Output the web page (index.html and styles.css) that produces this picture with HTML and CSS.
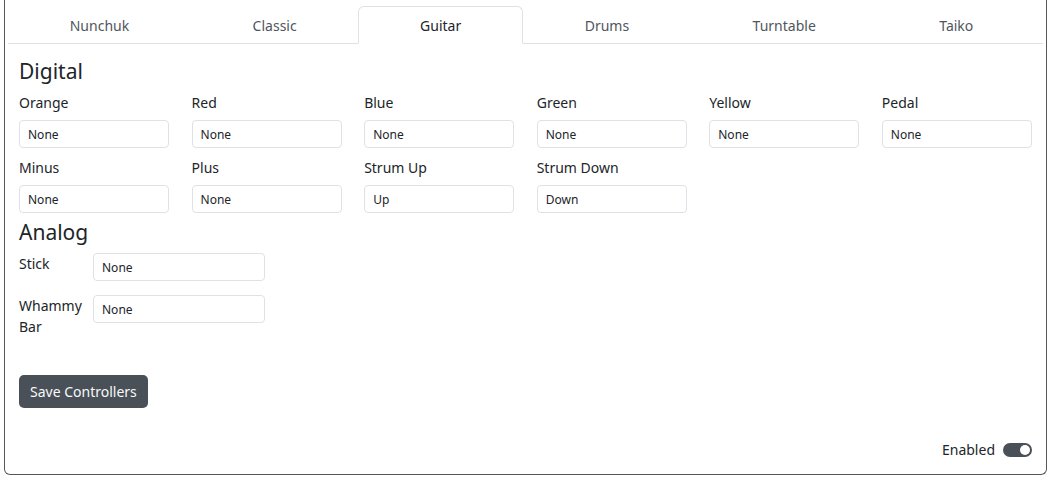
FILE: index.html
```html
<!DOCTYPE html>
<html lang="en">
<head>
<meta charset="utf-8">
<title>Controllers</title>
<link rel="stylesheet" href="styles.css">
</head>
<body>
<div class="card">
  <div class="card-header">
    <nav class="tabs">
      <a class="tab">Nunchuk</a>
      <a class="tab">Classic</a>
      <a class="tab active">Guitar</a>
      <a class="tab">Drums</a>
      <a class="tab">Turntable</a>
      <a class="tab">Taiko</a>
    </nav>
  </div>
  <div class="card-body">
    <h5 class="section-title">Digital</h5>
    <div class="digital-grid">
      <div class="field"><label class="field-label">Orange</label><input class="field-input" value="None"></div>
      <div class="field"><label class="field-label">Red</label><input class="field-input" value="None"></div>
      <div class="field"><label class="field-label">Blue</label><input class="field-input" value="None"></div>
      <div class="field"><label class="field-label">Green</label><input class="field-input" value="None"></div>
      <div class="field"><label class="field-label">Yellow</label><input class="field-input" value="None"></div>
      <div class="field"><label class="field-label">Pedal</label><input class="field-input" value="None"></div>
      <div class="field"><label class="field-label">Minus</label><input class="field-input" value="None"></div>
      <div class="field"><label class="field-label">Plus</label><input class="field-input" value="None"></div>
      <div class="field"><label class="field-label">Strum Up</label><input class="field-input" value="Up"></div>
      <div class="field"><label class="field-label">Strum Down</label><input class="field-input" value="Down"></div>
    </div>
    <h5 class="section-title analog-title">Analog</h5>
    <div class="analog-list">
      <div class="analog-row"><label class="analog-label">Stick</label><input class="field-input analog-input" value="None"></div>
      <div class="analog-row"><label class="analog-label">Whammy Bar</label><input class="field-input analog-input" value="None"></div>
    </div>
    <button class="btn-save">Save Controllers</button>
    <div class="footer-row">
      <span class="switch-label">Enabled</span>
      <span class="switch"><span class="knob"></span></span>
    </div>
  </div>
</div>
</body>
</html>
```

FILE: styles.css
```css
* { box-sizing: border-box; }

body {
  margin: 0;
  background: #fff;
  font-family: "Noto Sans", "Open Sans", sans-serif;
  font-size: 14px;
  line-height: 21px;
  color: #212529;
}

.card {
  margin: 0 5px 0 4px;
  border: 1px solid #54585d;
  border-top: none;
  border-radius: 0 0 6px 6px;
  background: #fff;
}

.card-header {
  margin: 0 3px;
  padding-top: 6px;
  border-bottom: 1px solid #dee2e6;
}

.tabs {
  display: flex;
  margin-right: 8px;
  margin-bottom: -1px;
}

.tab {
  flex: 1 1 auto;
  text-align: center;
  padding: 8px 16px 7px;
  border: 1px solid transparent;
  border-radius: 6px 6px 0 0;
  color: #4f565d;
  white-space: nowrap;
}

.tab.active {
  color: #212529;
  background: #fff;
  border-color: #dee2e6 #dee2e6 #fff;
}

.card-body {
  padding: 15px 14px 14px;
}

.section-title {
  margin: 0 0 9px;
  font-size: 21px;
  line-height: 24px;
  font-weight: 400;
}

.analog-title {
  margin-top: 7px;
  margin-bottom: 9px;
}

.digital-grid {
  display: grid;
  grid-template-columns: repeat(6, 1fr);
  column-gap: 22.4px;
  row-gap: 9px;
}

.field {
  display: flex;
  flex-direction: column;
}

.field-label {
  margin-bottom: 7px;
}

.field-input {
  display: block;
  width: 100%;
  height: 28px;
  margin: 0;
  padding: 0 8px;
  border: 1px solid #dee2e6;
  border-radius: 4px;
  font-family: "Noto Sans", "Open Sans", sans-serif;
  font-size: 12px;
  color: #212529;
  background: #fff;
  outline: none;
}

.analog-list {
  display: flex;
  flex-direction: column;
  gap: 14px;
}

.analog-row {
  display: grid;
  grid-template-columns: 66px 172px;
  column-gap: 8px;
  align-items: start;
}

.analog-input {
  width: 172px;
}

.btn-save {
  display: block;
  margin-top: 38px;
  padding: 6px 11px;
  border: none;
  border-radius: 5px;
  background: #495057;
  color: #f8f9fa;
  font-family: "Noto Sans", "Open Sans", sans-serif;
  font-size: 14px;
  line-height: 21px;
}

.footer-row {
  display: flex;
  justify-content: flex-end;
  align-items: center;
  gap: 8px;
  margin-top: 31px;
}

.switch {
  display: flex;
  justify-content: flex-end;
  align-items: center;
  width: 29px;
  height: 14px;
  padding: 0 2px;
  border-radius: 7px;
  background: #495057;
  margin-top: 1px;
}

.knob {
  width: 10px;
  height: 10px;
  border-radius: 50%;
  background: #fff;
}
```
